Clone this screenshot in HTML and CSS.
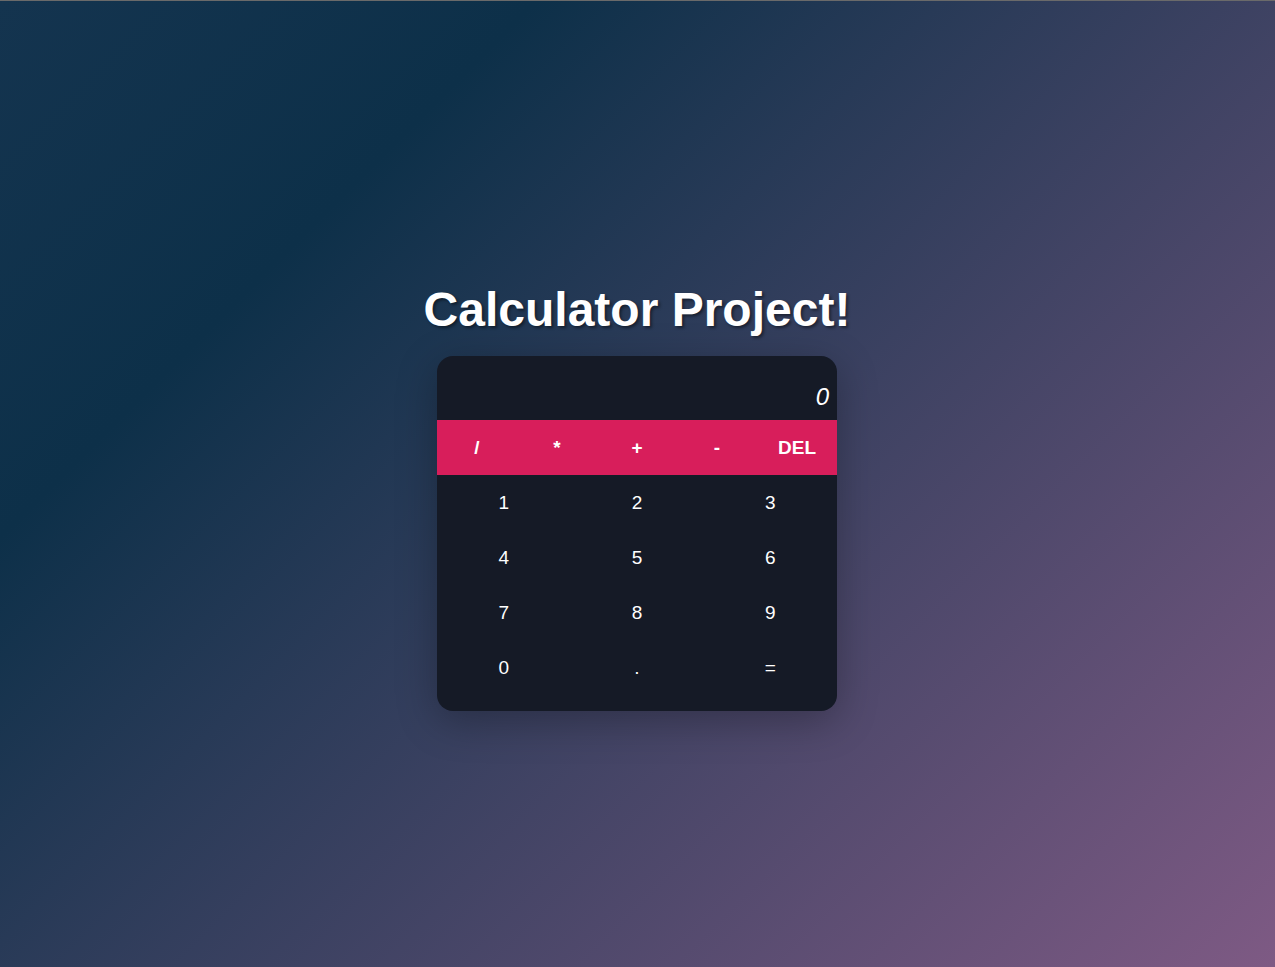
FILE: index.html
```html
<!DOCTYPE html>
<html lang="en">
<head>
<meta charset="utf-8">
<title>Calculator Project!</title>
<link rel="stylesheet" href="styles.css">
</head>
<body>
<main class="page">
  <h1 class="title">Calculator Project!</h1>
  <div class="calculator">
    <div class="display"><span class="result">0</span></div>
    <div class="operators">
      <button class="op">/</button>
      <button class="op">*</button>
      <button class="op">+</button>
      <button class="op">-</button>
      <button class="op">DEL</button>
    </div>
    <div class="digits">
      <button class="digit">1</button>
      <button class="digit">2</button>
      <button class="digit">3</button>
      <button class="digit">4</button>
      <button class="digit">5</button>
      <button class="digit">6</button>
      <button class="digit">7</button>
      <button class="digit">8</button>
      <button class="digit">9</button>
      <button class="digit">0</button>
      <button class="digit">.</button>
      <button class="digit">=</button>
    </div>
  </div>
</main>
</body>
</html>
```

FILE: styles.css
```css
* {
  box-sizing: border-box;
}

html, body {
  margin: 0;
  padding: 0;
}

body {
  font-family: "Liberation Sans", Arial, Helvetica, sans-serif;
  color: #fff;
  background: linear-gradient(135deg, #14344f 0%, #0d3049 24%, #7e5a84 100%);
  min-height: 100vh;
  border-top: 1px solid #6a6a6a;
}

.page {
  min-height: calc(100vh - 1px);
  display: flex;
  flex-direction: column;
  align-items: center;
  justify-content: center;
  padding-top: 24px;
  padding-right: 1px;
}

.title {
  margin: 0 0 19px;
  font-size: 48px;
  font-weight: 700;
  line-height: normal;
  color: #fff;
  text-shadow: 2px 2px 3px rgba(0, 0, 0, 0.45);
}

.calculator {
  width: 400px;
  background: #151a26;
  border-radius: 16px;
  overflow: hidden;
  box-shadow: 0 10px 40px rgba(0, 0, 0, 0.28);
  padding-bottom: 16px;
}

.display {
  height: 64px;
  display: flex;
  justify-content: flex-end;
  align-items: flex-end;
  padding: 0 8px 9px;
}

.result {
  font-size: 24px;
  font-style: italic;
  font-weight: 300;
  color: #fff;
}

.operators {
  display: grid;
  grid-template-columns: repeat(5, 1fr);
  background: #d81e5b;
}

.digits {
  display: grid;
  grid-template-columns: repeat(3, 1fr);
}

.op,
.digit {
  height: 55px;
  border: none;
  background: transparent;
  color: #fff;
  font-family: inherit;
  padding: 2px 0 0;
  cursor: pointer;
}

.op {
  font-size: 19px;
  font-weight: 700;
}

.digit {
  font-size: 19px;
  font-weight: 400;
}
```
